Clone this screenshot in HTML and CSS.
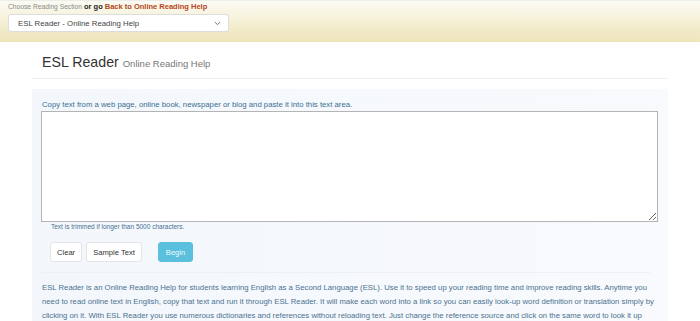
FILE: index.html
```html
<!DOCTYPE html>
<html>
<head>
<meta charset="utf-8">
<link rel="stylesheet" href="styles.css">
</head>
<body>
<div class="topbar">
  <div class="topline"><span class="choose">Choose Reading Section</span><span class="orgo">or go</span><a class="back" href="#">Back to Online Reading Help</a></div>
  <div class="select"><span>ESL Reader - Online Reading Help</span><svg class="chev" width="7" height="5" viewBox="0 0 7 5"><path d="M0.8 1 L3.5 3.7 L6.2 1" fill="none" stroke="#777" stroke-width="1"/></svg></div>
</div>
<div class="container">
  <div class="page-header">
    <h1>ESL Reader <small>Online Reading Help</small></h1>
  </div>
  <div class="panel">
    <label class="lbl">Copy text from a web page, online book, newspaper or blog and paste it into this text area.</label>
    <textarea class="ta"></textarea>
    <div class="hint">Text is trimmed if longer than 5000 characters.</div>
    <div class="buttons">
      <button class="btn">Clear</button>
      <button class="btn">Sample Text</button>
      <button class="btn btn-info">Begin</button>
    </div>
    <hr class="sep">
    <p class="desc">ESL Reader is an Online Reading Help for students learning English as a Second Language (ESL). Use it to speed up your reading time and improve reading skills. Anytime you need to read online text in English, copy that text and run it through ESL Reader. It will make each word into a link so you can easily look-up word definition or translation simply by clicking on it. With ESL Reader you use numerous dictionaries and references without reloading text. Just change the reference source and click on the same word to look it up</p>
  </div>
</div>
</body>
</html>
```
FILE: styles.css
```css
html, body {
  margin: 0;
  padding: 0;
  background: #fff;
  font-family: "Liberation Sans", Arial, sans-serif;
  -webkit-font-smoothing: antialiased;
  overflow: hidden;
}
.topbar {
  height: 40px;
  border-top: 1px solid #eceee9;
  border-bottom: 1px solid #ede3b5;
  background: linear-gradient(to bottom, #fbfbf4 0%, #f5f0d6 50%, #eee5bb 100%);
  padding: 0 8px;
  box-sizing: content-box;
}
.topline {
  height: 13px;
  line-height: 12px;
  white-space: nowrap;
  display: flex;
  align-items: baseline;
}
.choose {
  font-size: 6.7px;
  color: #8a8a8a;
  margin-right: 2px;
}
.orgo {
  font-size: 7.5px;
  font-weight: bold;
  color: #222;
  margin-right: 2px;
}
.back {
  font-size: 7.5px;
  font-weight: bold;
  color: #b5461a;
  text-decoration: none;
}
.select {
  width: 221px;
  height: 18px;
  box-sizing: border-box;
  background: #fff;
  border: 1px solid #ddd;
  border-radius: 3px;
  display: flex;
  align-items: center;
  justify-content: space-between;
  padding: 0 7px 0 9px;
  font-size: 7.8px;
  color: #444;
}
.chev { display: block; }
.container {
  margin: 0 32px;
}
.page-header {
  height: 36px;
  border-bottom: 1px solid #f0f0f0;
  padding-left: 10px;
}
h1 {
  margin: 0;
  padding-top: 12px;
  font-size: 14.2px;
  font-weight: normal;
  color: #333;
  line-height: 16px;
}
h1 small {
  font-size: 9.5px;
  color: #777;
}
.panel {
  margin-top: 10px;
  background: linear-gradient(to right, #f3f7fc, #f8fafd);
  padding: 11px 10px 0 10px;
}
.lbl {
  display: block;
  font-size: 7.75px;
  color: #3b6f93;
  line-height: 10px;
}
.ta {
  display: block;
  width: 617px;
  height: 111px;
  margin: 1px 0 0 -1px;
  box-sizing: border-box;
  border: 1px solid #b4b4b4;
  background: #fff;
  resize: both;
}
.hint {
  font-size: 6.5px;
  color: #4a7192;
  padding-left: 9px;
  line-height: 10px;
}
.buttons {
  display: flex;
  gap: 4px;
  padding-left: 8px;
  margin-top: 10px;
}
.btn {
  font-family: "Liberation Sans", Arial, sans-serif;
  font-size: 7.6px;
  height: 20px;
  padding: 0 6px;
  background: #fff;
  border: 1px solid #e4e4e4;
  border-radius: 3px;
  color: #333;
}
.btn-info {
  margin-left: 12px;
  background: #5bc0de;
  border-color: #5bc0de;
  color: #eef9fd;
  padding: 0 7px;
}
.sep {
  border: 0;
  border-top: 1px solid #eef0f2;
  margin: 10px 8px 0 0;
}
.desc {
  margin: 8px 0 0 0;
  font-size: 7.75px;
  line-height: 14px;
  color: #4b7190;
}
```
